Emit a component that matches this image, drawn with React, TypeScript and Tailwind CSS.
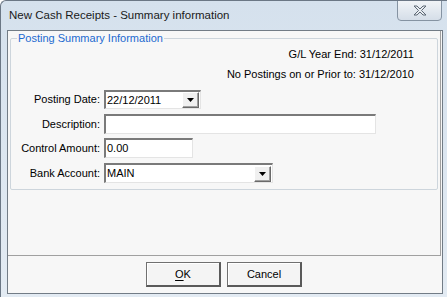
import React from 'react';

const font = { fontFamily: '"Liberation Sans", Arial, sans-serif' };

function DropButton() {
  return (
    <div className="w-[17px] h-[16px] flex items-center justify-center bg-[#f0f0f0] border border-t-[#ffffff] border-l-[#ffffff] border-b-[#6a6a6a] border-r-[#6a6a6a] shadow-[inset_-1px_-1px_0_#a0a0a0]">
      <svg width="7" height="4" viewBox="0 0 7 4">
        <path d="M0 0h7L3.5 4z" fill="#000" />
      </svg>
    </div>
  );
}

function Field({ label, width, value, combo, h = 'h-[20px]' }: { label: string; width: string; value?: string; combo?: boolean; h?: string }) {
  return (
    <div className={`flex items-center ${h}`}>
      <div className="w-[90px] text-right pr-[1px]">{label}</div>
      <div
        className={`ml-[3px] ${h} ${width} bg-white border-t-2 border-l-2 border-t-[#7a7a7a] border-l-[#7a7a7a] border-b border-r border-b-[#e4e4e4] border-r-[#e4e4e4] flex items-center justify-between pl-[1px] pr-[1px]`}
      >
        <span className="leading-none">{value}</span>
        {combo && <DropButton />}
      </div>
    </div>
  );
}

function WinButton({ children }: { children: React.ReactNode }) {
  return (
    <button className="w-[75px] h-[25px] bg-[#f4f4f4] border border-[#707070] border-r-2 border-b-2 border-r-[#5a5a5a] border-b-[#5a5a5a] shadow-[inset_1px_1px_0_#ffffff] text-[11px] text-black flex items-center justify-center">
      {children}
    </button>
  );
}

export default function App() {
  return (
    <div
      className="w-[447px] h-[297px] overflow-hidden bg-gradient-to-b from-[#d5e1ed] to-[#e3ebf3] border-l border-t border-[#6b7785] rounded-tl-[6px] text-[11px] text-black"
      style={font}
    >
      {/* title bar */}
      <div className="h-[28px] flex items-start justify-between">
        <div className="pl-[8px] pt-[7px] text-[11.5px] text-[#1a1a1a] leading-[14px]">
          New Cash Receipts - Summary information
        </div>
        <div className="mr-[5px] w-[45px] h-[21px] -mt-px rounded-b-[4px] border border-[#8593a2] bg-gradient-to-b from-[#f1f4f7] to-[#d5dee8] flex items-center justify-center">
          <svg width="14" height="11" viewBox="0 0 14 11">
            <path
              d="M1 1h3l3 3 3-3h3L8.5 5.5 13 10h-3L7 7l-3 3H1l4.5-4.5z"
              fill="#e9edf1"
              stroke="#5d6875"
              strokeWidth="1"
              strokeLinejoin="round"
            />
          </svg>
        </div>
      </div>

      {/* client area */}
      <div className="ml-[6px] w-[436px] h-[264px] mt-px border border-[#727c86] bg-[#f7f7f7] flex flex-col">
        <div className="h-[225px] mr-[1px] border-r border-b border-[#a0a0a0] pt-px">
          <fieldset className="ml-[2px] w-[428px] h-[158px] border border-[#cdd5dc] rounded-[2px] pr-[22px] m-0 p-0">
            <legend className="ml-[6px] px-[1px] text-[#1c6ad0] leading-[13px]">Posting Summary Information</legend>
            <div className="flex flex-col items-end pr-px">
              <div className="mt-[2px] leading-[14px]">G/L Year End: 31/12/2011</div>
              <div className="mt-[6px] leading-[14px]">No Postings on or Prior to: 31/12/2010</div>
            </div>
            <div className="flex flex-col mt-[9px] gap-[5px]">
              <Field label="Posting Date:" width="w-[97px]" value="22/12/2011" combo h="h-[19px]" />
              <Field label="Description:" width="w-[272px]" />
              <div className="-mt-px">
                <Field label="Control Amount:" width="w-[89px]" value="0.00" />
              </div>
              <Field label="Bank Account:" width="w-[169px]" value="MAIN" combo />
            </div>
          </fieldset>
        </div>
        <div className="flex justify-center gap-[6px] pt-[6px] pr-[2px]">
          <WinButton>
            <span className="underline underline-offset-2">O</span>K
          </WinButton>
          <WinButton>Cancel</WinButton>
        </div>
      </div>
    </div>
  );
}
